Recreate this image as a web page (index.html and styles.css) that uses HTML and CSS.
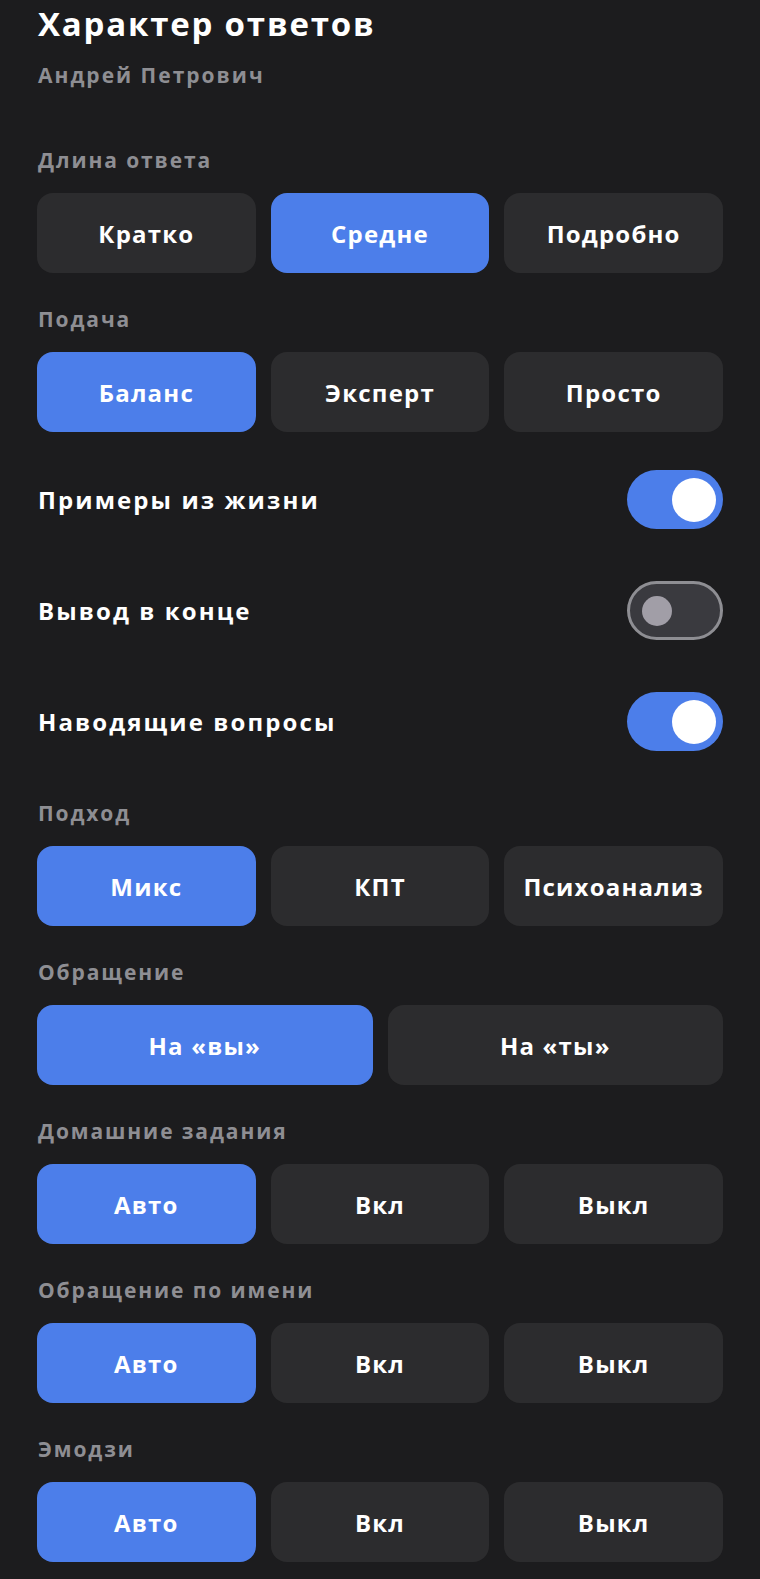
FILE: index.html
```html
<!DOCTYPE html>
<html lang="ru">
<head>
<meta charset="utf-8">
<link rel="stylesheet" href="styles.css">
</head>
<body>
<div class="page">
  <h1 class="title">Характер ответов</h1>
  <div class="subtitle">Андрей Петрович</div>

  <div class="label first">Длина ответа</div>
  <div class="seg three">
    <div class="opt">Кратко</div>
    <div class="opt on">Средне</div>
    <div class="opt">Подробно</div>
  </div>

  <div class="label">Подача</div>
  <div class="seg three">
    <div class="opt on">Баланс</div>
    <div class="opt">Эксперт</div>
    <div class="opt">Просто</div>
  </div>

  <div class="toggles">
    <div class="trow"><span class="tlabel">Примеры из жизни</span><span class="switch on"><span class="knob"></span></span></div>
    <div class="trow"><span class="tlabel">Вывод в конце</span><span class="switch"><span class="knob"></span></span></div>
    <div class="trow"><span class="tlabel">Наводящие вопросы</span><span class="switch on"><span class="knob"></span></span></div>
  </div>

  <div class="label after-toggles">Подход</div>
  <div class="seg three">
    <div class="opt on">Микс</div>
    <div class="opt">КПТ</div>
    <div class="opt">Психоанализ</div>
  </div>

  <div class="label">Обращение</div>
  <div class="seg two">
    <div class="opt on">На «вы»</div>
    <div class="opt">На «ты»</div>
  </div>

  <div class="label">Домашние задания</div>
  <div class="seg three">
    <div class="opt on">Авто</div>
    <div class="opt">Вкл</div>
    <div class="opt">Выкл</div>
  </div>

  <div class="label">Обращение по имени</div>
  <div class="seg three">
    <div class="opt on">Авто</div>
    <div class="opt">Вкл</div>
    <div class="opt">Выкл</div>
  </div>

  <div class="label">Эмодзи</div>
  <div class="seg three">
    <div class="opt on">Авто</div>
    <div class="opt">Вкл</div>
    <div class="opt">Выкл</div>
  </div>
</div>
</body>
</html>
```

FILE: styles.css
```css
html, body {
  margin: 0;
  padding: 0;
  background: #1c1c1e;
}
body {
  font-family: "Open Sans", "Noto Sans", sans-serif;
  color: #ffffff;
}
.page {
  display: flex;
  flex-direction: column;
  padding: 4px 37px 0 37px;
}
.title {
  margin: 0;
  font-size: 33px;
  line-height: 40px;
  font-weight: 700;
  letter-spacing: 1.8px;
  padding-left: 1px;
}
.subtitle {
  margin-top: 19px;
  font-size: 21px;
  line-height: 24px;
  font-weight: 700;
  color: #8e8e93;
  letter-spacing: 2px;
  padding-left: 1px;
}
.label {
  margin-top: 34px;
  margin-bottom: 21px;
  font-size: 21px;
  line-height: 24px;
  font-weight: 700;
  color: #8e8e93;
  letter-spacing: 1.9px;
  padding-left: 1px;
}
.label.first {
  margin-top: 61px;
}
.label.after-toggles {
  margin-top: 24px;
}
.seg {
  display: grid;
  gap: 15px;
}
.seg.three {
  grid-template-columns: 1fr 1fr 1fr;
}
.seg.two {
  grid-template-columns: 1fr 1fr;
}
.opt {
  height: 80px;
  border-radius: 16px;
  background: #2c2c2e;
  display: flex;
  align-items: center;
  justify-content: center;
  font-size: 24px;
  font-weight: 700;
  letter-spacing: 1.2px;
  color: #ffffff;
}
.opt.on {
  background: #4c7eea;
}
.toggles {
  margin-top: 12px;
  display: flex;
  flex-direction: column;
}
.trow {
  height: 111px;
  display: flex;
  align-items: center;
  justify-content: space-between;
}
.tlabel {
  font-size: 24px;
  font-weight: 700;
  letter-spacing: 2.1px;
  padding-left: 1px;
}
.switch {
  width: 96px;
  height: 59px;
  box-sizing: border-box;
  border-radius: 30px;
  background: #3a3a3f;
  border: 3px solid #8e8e93;
  display: flex;
  align-items: center;
  padding-left: 12px;
}
.switch .knob {
  width: 30px;
  height: 30px;
  border-radius: 50%;
  background: #a19ea7;
}
.switch.on {
  background: #4c7eea;
  border: none;
  justify-content: flex-end;
  padding-left: 0;
  padding-right: 7px;
}
.switch.on .knob {
  width: 44px;
  height: 44px;
  background: #ffffff;
}
```
